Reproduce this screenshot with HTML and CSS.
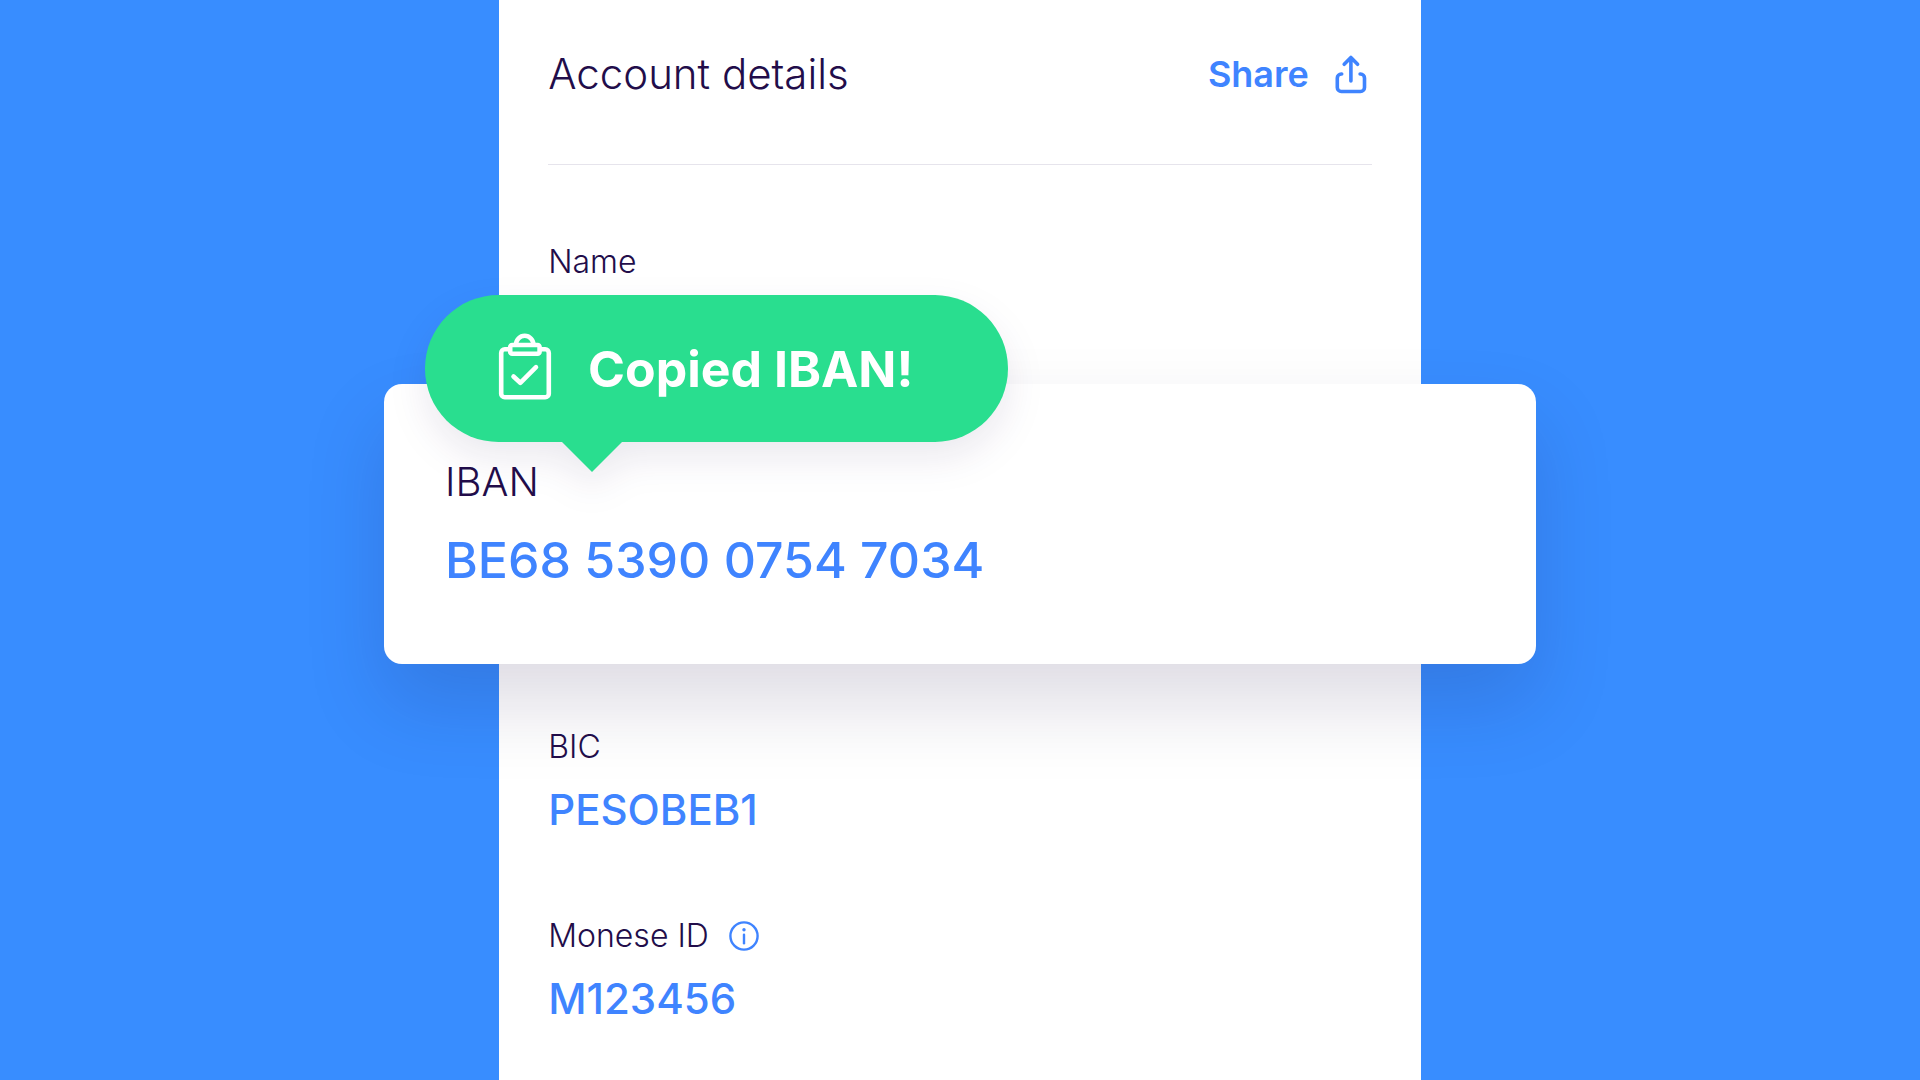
FILE: index.html
```html
<!DOCTYPE html>
<html lang="en">
<head>
  <meta charset="utf-8">
  <meta name="viewport" content="width=device-width, initial-scale=1">
  <title>Account details</title>
  <link rel="stylesheet" href="styles.css">
</head>
<body>
  <main class="panel">
    <header class="panel-header">
      <h1 class="title">Account details</h1>
      <button class="share" type="button">
        Share
        <svg class="share-icon" viewBox="0 0 40 40" aria-hidden="true">
          <path d="M9.7 20H9.3a4 4 0 0 0-4 4v9.5a4 4 0 0 0 4 4h19.2a4 4 0 0 0 4-4V24a4 4 0 0 0-4-4h-.4"/>
          <path d="M18.9 27V3.6M12.2 10.3l6.7-6.8 6.7 6.8"/>
        </svg>
      </button>
    </header>

    <section class="field field-name">
      <h2 class="label">Name</h2>
    </section>

    <section class="card">
      <h2 class="card-label">IBAN</h2>
      <p class="card-value">BE68 5390 0754 7034</p>
      <div class="toast" role="status">
        <svg class="toast-icon" viewBox="0 0 56 74" aria-hidden="true">
          <rect x="4.2" y="17.3" width="47.6" height="48" rx="3.6"/>
          <path d="M18.9 13a8.8 9.2 0 0 1 17.6 0"/>
          <rect class="clip" x="13.2" y="13" width="29.4" height="8.8" rx="2"/>
          <path d="M16.5 44.5l6.8 6.3L39 35.2"/>
        </svg>
        <span>Copied IBAN!</span>
      </div>
    </section>

    <section class="field field-bic">
      <h2 class="label">BIC</h2>
      <p class="value">PESOBEB1</p>
    </section>

    <section class="field">
      <div class="label-row">
        <h2 class="label">Monese ID</h2>
        <button class="info" type="button" aria-label="About Monese ID">
          <svg class="info-icon" viewBox="0 0 30 30" aria-hidden="true">
            <circle cx="15" cy="15" r="13.6"/>
            <path d="M15 13.8v8.4"/>
            <circle class="dot" cx="15" cy="8.7" r="1.7"/>
          </svg>
        </button>
      </div>
      <p class="value">M123456</p>
    </section>
  </main>
</body>
</html>
```
FILE: styles.css
```css
:root {
  --backdrop: #388dff;
  --ink: #220d4a;
  --link: #3f84ff;
  --green: #29de8f;
  --rule: #e6e4ec;
}

* {
  box-sizing: border-box;
}

body {
  margin: 0;
  background: var(--backdrop);
  color: var(--ink);
  font-family: Inter, "Liberation Sans", sans-serif;
}

h1,
h2,
p {
  margin: 0;
}

button {
  padding: 0;
  border: 0;
  background: none;
  color: var(--link);
  font: inherit;
  cursor: pointer;
}

svg {
  display: block;
  fill: none;
  stroke: currentColor;
  stroke-linecap: round;
  stroke-linejoin: round;
}

.panel {
  width: 48vw;
  min-height: 100vh;
  margin: 0 auto;
  padding: 50px 49px 48px;
  background: #fff;
}

.panel-header {
  display: flex;
  align-items: center;
  justify-content: space-between;
  padding-bottom: 66px;
  border-bottom: 1px solid var(--rule);
}

.title {
  font-size: 42px;
  font-weight: 350;
  line-height: 48px;
}

.share {
  display: flex;
  align-items: center;
  gap: 23px;
  font-size: 36px;
  font-weight: 600;
  line-height: 48px;
}

.share-icon {
  width: 40px;
  height: 40px;
  stroke-width: 3.6;
}

.field {
  display: grid;
  gap: 19px;
}

.field-name {
  margin: 77px 0 102px;
}

.field-bic {
  margin-bottom: 82px;
}

.label {
  font-size: 32px;
  font-weight: 350;
  line-height: 40px;
}

.label-row {
  display: flex;
  align-items: center;
  gap: 20px;
}

.value {
  color: var(--link);
  font-size: 42px;
  font-weight: 500;
  line-height: 48px;
}

.info-icon {
  width: 30px;
  height: 30px;
  stroke-width: 2.4;
}

.info-icon .dot {
  fill: currentColor;
  stroke: none;
}

/* The highlighted row is wider than the panel: 60vw against 48vw. */
.card {
  position: relative;
  display: grid;
  gap: 24px;
  width: 60vw;
  margin: 0 0 63px calc(-6vw - 49px);
  padding: 74px 61px;
  border-radius: 18px;
  background: #fff;
  box-shadow: 0 40px 80px rgba(28, 12, 64, 0.15);
}

.card-label {
  font-size: 40px;
  font-weight: 350;
  line-height: 48px;
}

.card-value {
  color: var(--link);
  font-size: 50px;
  font-weight: 500;
  line-height: 60px;
}

.toast {
  position: absolute;
  top: -89px;
  left: 41px;
  display: flex;
  align-items: center;
  gap: 35px;
  height: 147px;
  padding: 0 95px 0 72px;
  border-radius: 74px;
  background: var(--green);
  color: #fff;
  font-size: 50px;
  font-weight: 700;
  line-height: 60px;
  white-space: nowrap;
  filter: drop-shadow(0 16px 18px rgba(34, 13, 74, 0.09));
}

.toast::after {
  content: "";
  position: absolute;
  top: 100%;
  left: 137px;
  width: 60px;
  height: 30px;
  background: var(--green);
  clip-path: polygon(0 0, 100% 0, 50% 100%);
}

.toast-icon {
  width: 56px;
  height: 74px;
  stroke-width: 4.6;
}

.toast-icon .clip {
  fill: var(--green);
}
```
